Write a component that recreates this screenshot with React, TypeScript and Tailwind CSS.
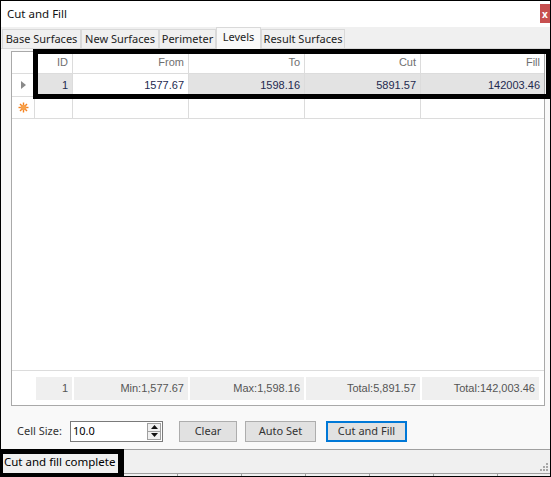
import React from "react";

const UI = { fontFamily: '"Noto Sans", "Liberation Sans", sans-serif' };
const GRID = { fontFamily: '"Liberation Sans", Arial, sans-serif' };

const TABS = [
  { label: "Base Surfaces", w: "w-[79px]" },
  { label: "New Surfaces", w: "w-[78px]" },
  { label: "Perimeter", w: "w-[57px]" },
  { label: "Levels", w: "w-[45px]", active: true },
  { label: "Result Surfaces", w: "w-[84px]" },
];

const COLS = ["w-[23px]", "w-[38px]", "w-[116px]", "w-[116px]", "w-[116px]", "flex-1"];

const Arrow = () => (
  <svg width="5" height="8" viewBox="0 0 5 8">
    <path d="M0 0 L5 4 L0 8 Z" fill="#8a8a8a" />
  </svg>
);

const Star = () => (
  <svg width="11" height="11" viewBox="0 0 11 11">
    <g stroke="#f5821f" strokeWidth="1.4">
      <line x1="5.5" y1="0.5" x2="5.5" y2="10.5" />
      <line x1="0.5" y1="5.5" x2="10.5" y2="5.5" />
      <line x1="2" y1="2" x2="9" y2="9" />
      <line x1="9" y1="2" x2="2" y2="9" />
    </g>
    <circle cx="5.5" cy="5.5" r="2.8" fill="#f7a04a" />
  </svg>
);

const Grip = () => (
  <svg width="10" height="10" viewBox="0 0 10 10">
    <g fill="#a8a8a8">
      <rect x="7" y="1" width="2" height="2" />
      <rect x="4" y="4" width="2" height="2" />
      <rect x="7" y="4" width="2" height="2" />
      <rect x="1" y="7" width="2" height="2" />
      <rect x="4" y="7" width="2" height="2" />
      <rect x="7" y="7" width="2" height="2" />
    </g>
  </svg>
);

export default function App() {
  const header = ["", "ID", "From", "To", "Cut", "Fill"];
  const row = ["", "1", "1577.67", "1598.16", "5891.57", "142003.46"];
  const footer = ["1", "Min:1,577.67", "Max:1,598.16", "Total:5,891.57", "Total:142,003.46"];

  return (
    <div
      className="relative flex h-[477px] w-[551px] flex-col overflow-hidden border border-black bg-white text-[11px] text-black"
      style={UI}
    >
      {/* title bar */}
      <div className="flex h-[26px] shrink-0 items-center justify-between bg-white pl-[6px]">
        <span className="text-[11.5px] text-[#111]">Cut and Fill</span>
        <div className="mr-0 flex h-[19px] w-[10px] items-center justify-center self-start mt-[3px] bg-[#c75050] text-[10px] font-bold leading-none text-white">
          x
        </div>
      </div>

      {/* tabs */}
      <div className="flex h-[22px] shrink-0 items-end border-b border-[#d9d9d9] bg-[#f0f0f0] pl-[1px]">
        {TABS.map((t) =>
          t.active ? (
            <div
              key={t.label}
              className={`${t.w} -mb-px flex h-[22px] items-center justify-center border border-b-0 border-[#d9d9d9] bg-[#f9f9f9] pb-[2px] text-[#222]`}
            >
              {t.label}
            </div>
          ) : (
            <div
              key={t.label}
              className={`${t.w} flex h-[19px] items-center justify-center border border-b-0 border-[#d9d9d9] bg-[#f0f0f0] text-[#222]`}
            >
              {t.label}
            </div>
          ),
        )}
      </div>

      {/* pane */}
      <div className="flex flex-1 flex-col bg-[#f9f9f9] px-[10px]">
        <div className="mt-[2px] flex h-[355px] w-[534px] flex-col border border-[#a9a9a9] bg-white" style={GRID}>
          <div className="flex h-[22px] border-b border-[#dcdcdc] text-[#6f6f6f]">
            {header.map((h, i) => (
              <div
                key={i}
                className={`${COLS[i]} flex items-center justify-end pr-[4px] ${i < 5 ? "border-r border-[#dcdcdc]" : ""}`}
              >
                {h}
              </div>
            ))}
          </div>
          <div className="flex h-[23px] border-b border-[#dcdcdc] text-[#1e2a4f]">
            {row.map((c, i) => (
              <div
                key={i}
                className={`${COLS[i]} flex items-center ${i === 0 ? "justify-center bg-white" : "justify-end pr-[4px]"} ${
                  i === 0 || i === 2 ? "" : "bg-[#e3e3e3]"
                } ${i < 5 ? "border-r border-[#dcdcdc]" : ""}`}
              >
                {i === 0 ? <Arrow /> : c}
              </div>
            ))}
          </div>
          <div className="flex h-[22px] border-b border-[#dcdcdc]">
            {COLS.map((w, i) => (
              <div
                key={i}
                className={`${w} flex items-center justify-center ${i < 5 ? "border-r border-[#dcdcdc]" : ""}`}
              >
                {i === 0 ? <Star /> : null}
              </div>
            ))}
          </div>
          <div className="flex-1" />
          <div className="flex h-[35px] items-center gap-[2px] border-t border-[#dcdcdc] pl-[24px] pr-[5px] text-[#555]">
            {footer.map((f, i) => (
              <div
                key={i}
                className={`${i === 0 ? "w-[36px]" : i === 4 ? "flex-1" : "w-[114px]"} flex h-[23px] items-center justify-end bg-[#efefef] pr-[4px]`}
              >
                {f}
              </div>
            ))}
          </div>
        </div>

        {/* controls */}
        <div className="mt-[14px] flex h-[22px] items-center text-[#333]">
          <span className="ml-[6px] w-[53px]">Cell Size:</span>
          <div className="flex h-[21px] w-[93px] items-center border border-[#7a7a7a] bg-white pl-[2px]">
            <span className="flex-1 text-black">10.0</span>
            <div className="mr-[1px] flex h-[17px] w-[14px] flex-col border border-[#a0a0a0] bg-[#f0f0f0]">
              <div className="flex flex-1 items-center justify-center border-b border-[#a0a0a0]">
                <svg width="7" height="4" viewBox="0 0 7 4">
                  <path d="M0 4 L3.5 0 L7 4 Z" fill="#111" />
                </svg>
              </div>
              <div className="flex flex-1 items-center justify-center">
                <svg width="7" height="4" viewBox="0 0 7 4">
                  <path d="M0 0 L3.5 4 L7 0 Z" fill="#111" />
                </svg>
              </div>
            </div>
          </div>
          <button className="ml-[16px] flex h-[21px] w-[58px] items-center justify-center border border-[#adadad] bg-[#e1e1e1] text-[#333]">
            Clear
          </button>
          <button className="ml-[8px] flex h-[21px] w-[71px] items-center justify-center border border-[#adadad] bg-[#e1e1e1] text-[#333]">
            Auto Set
          </button>
          <button className="ml-[10px] flex h-[21px] w-[81px] items-center justify-center border-2 border-[#0078d7] bg-[#e1e1e1] text-[#333]">
            Cut and Fill
          </button>
        </div>
      </div>

      {/* status bar */}
      <div className="flex h-[27px] shrink-0 flex-col border-t border-[#a0a0a0] bg-[#f0f0f0]">
        <div className="flex flex-1 items-center justify-between pl-[3px] pr-[1px]">
          <span className="text-[11.5px] text-black">Cut and fill complete</span>
          <div className="self-end mb-[1px]">
            <Grip />
          </div>
        </div>
        <div className="flex h-[3px] border-t border-[#a0a0a0]">
          {[176, 64, 64, 64, 64, 64, 53].map((w, i) => (
            <div key={i} className={`h-full ${i > 0 ? "border-l border-[#a0a0a0]" : ""}`} style={{ width: w }} />
          ))}
        </div>
      </div>

      {/* annotation boxes */}
      <div className="pointer-events-none absolute left-[32px] top-[48px] h-[50px] w-[518px] border-[5px] border-black" />
      <div className="pointer-events-none absolute left-[-1px] top-[448px] h-[29px] w-[124px] border-y-[5px] border-l-[3px] border-r-[6px] border-black" />
    </div>
  );
}
